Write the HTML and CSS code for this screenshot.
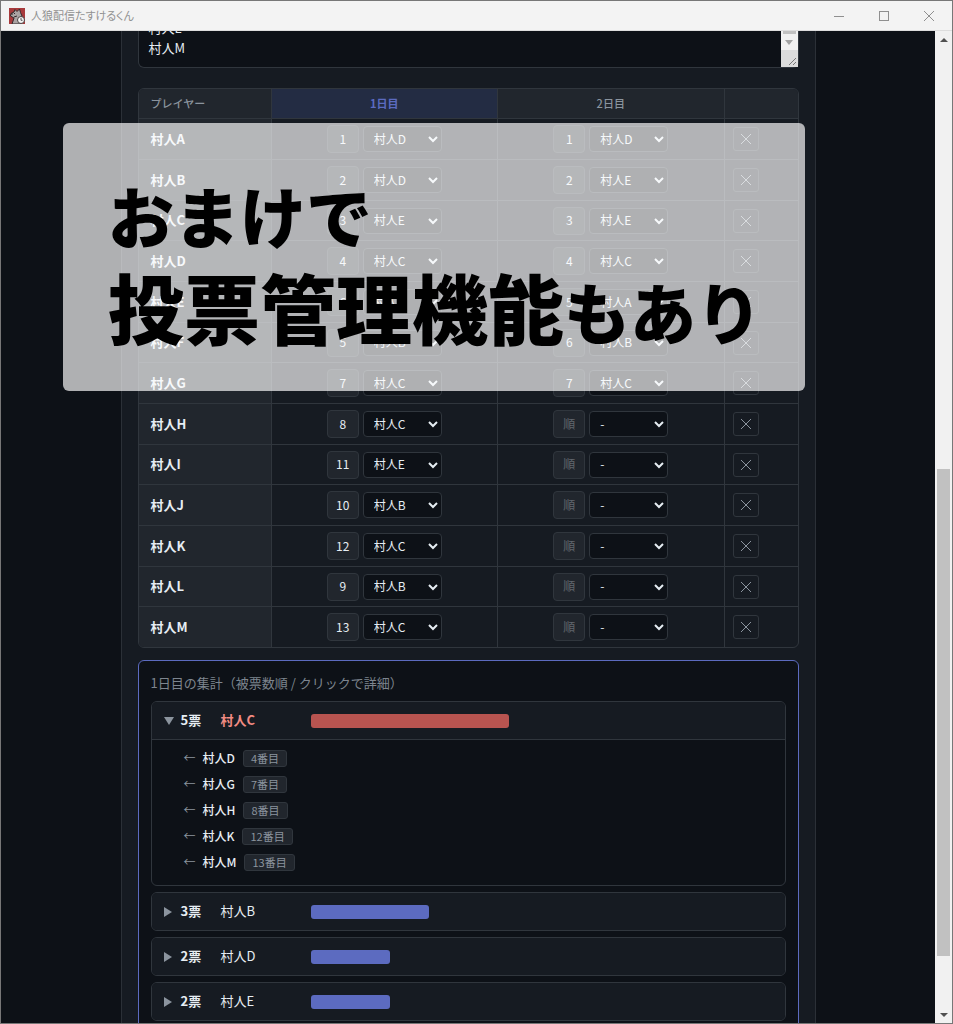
FILE: index.html
```html
<!DOCTYPE html>
<html lang="ja">
<head>
  <meta charset="UTF-8">
  <meta name="viewport" content="width=device-width, initial-scale=1.0">
  <title>人狼配信たすけるくん</title>
  <link rel="stylesheet" href="styles.css">
</head>
<body>
  <div class="window">
    <header class="titlebar">
      <svg class="app-icon" viewBox="0 0 16 16" aria-hidden="true">
        <rect width="16" height="16" fill="#a83a3c"/>
        <path d="M3 16 L5 10 L1.500 8 L2 5.500 L5 4 L6 1.500 L8 3.500 L10.500 1 L11.500 4.500 L13 8 L12 12 L11 16 Z" fill="#aaa3a3" stroke="#332b2d" stroke-width="1"/>
        <path d="M2 6 L4 6 M5 5.500 L6 5.500 M5 9 L8 8" stroke="#332b2d" stroke-width="1" fill="none"/>
        <circle cx="12" cy="12" r="3.500" fill="#f4f4f4" stroke="#4a4243"/>
        <path d="M12 10 V12.300 H13.500" fill="none" stroke="#555"/>
      </svg>
      <span class="app-title">人狼配信たすけるくん</span>
      <div class="window-buttons">
        <button type="button" aria-label="最小化"><svg viewBox="0 0 12 12"><path d="M1 6.500H11"/></svg></button>
        <button type="button" aria-label="最大化"><svg viewBox="0 0 12 12"><rect x="1.500" y="1.500" width="9" height="9"/></svg></button>
        <button type="button" aria-label="閉じる"><svg viewBox="0 0 12 12"><path d="M1 1L11 11M11 1L1 11"/></svg></button>
      </div>
    </header>

    <div class="viewport">
      <main class="page">
        <div class="card">
          <div class="names">
            <textarea class="names-input" aria-label="プレイヤー名">村人L
村人M</textarea>
            <div class="names-scroll">
              <span class="names-thumb"></span>
              <svg class="names-arrow" viewBox="0 0 8 5"><path d="M0 0H8L4 5Z"/></svg>
              <svg class="names-grip" viewBox="0 0 17 17"><path d="M8 15L15 8M12 15L15 12"/></svg>
            </div>
          </div>

          <div class="table-wrap">
            <table class="votes">
              <colgroup>
                <col class="col-name"><col><col><col class="col-delete">
              </colgroup>
              <thead>
                <tr>
                  <th class="left">プレイヤー</th>
                  <th class="active">1日目</th>
                  <th>2日目</th>
                  <th></th>
                </tr>
              </thead>
              <tbody id="vote-rows"></tbody>
            </table>
          </div>

          <section class="summary-panel">
            <h2 class="summary-title">1日目の集計（被票数順 / クリックで詳細）</h2>
            <div class="results">
              <details class="result top" open>
                <summary>
                  <span class="marker"></span><span class="count">5票</span><span class="target">村人C</span>
                  <span class="track"><span class="bar" style="width: 100%"></span></span>
                </summary>
                <ul class="voters">
                  <li><span class="arrow">←</span><span class="voter">村人D</span><span class="order">4番目</span></li>
                  <li><span class="arrow">←</span><span class="voter">村人G</span><span class="order">7番目</span></li>
                  <li><span class="arrow">←</span><span class="voter">村人H</span><span class="order">8番目</span></li>
                  <li><span class="arrow">←</span><span class="voter">村人K</span><span class="order">12番目</span></li>
                  <li><span class="arrow">←</span><span class="voter">村人M</span><span class="order">13番目</span></li>
                </ul>
              </details>
              <details class="result">
                <summary>
                  <span class="marker"></span><span class="count">3票</span><span class="target">村人B</span>
                  <span class="track"><span class="bar" style="width: 60%"></span></span>
                </summary>
              </details>
              <details class="result">
                <summary>
                  <span class="marker"></span><span class="count">2票</span><span class="target">村人D</span>
                  <span class="track"><span class="bar" style="width: 40%"></span></span>
                </summary>
              </details>
              <details class="result">
                <summary>
                  <span class="marker"></span><span class="count">2票</span><span class="target">村人E</span>
                  <span class="track"><span class="bar" style="width: 40%"></span></span>
                </summary>
              </details>
            </div>
          </section>
        </div>
      </main>

      <div class="scrollbar" aria-hidden="true">
        <span class="scroll-arrow"><svg viewBox="0 0 8 4"><path d="M0 4H8L4 0Z"/></svg></span>
        <span class="scroll-before"></span>
        <span class="scroll-thumb"></span>
        <span class="scroll-after"></span>
        <span class="scroll-arrow"><svg viewBox="0 0 8 4"><path d="M0 0H8L4 4Z"/></svg></span>
      </div>
    </div>

    <div class="caption">
      <p>おまけで</p>
      <p><span class="kanji">投票管理機能</span>もあり</p>
    </div>
  </div>

  <script src="script.js"></script>
</body>
</html>
```

FILE: styles.css
```css
* {
  box-sizing: border-box;
}

body {
  margin: 0;
  background: #0d1117;
  color: #e6edf3;
  font-family: "Noto Sans CJK JP", sans-serif;
  font-size: 13px;
}

button, input, select, textarea {
  font-family: inherit;
  color: inherit;
}

.window {
  position: relative;
  display: flex;
  flex-direction: column;
  height: 100vh;
  border: 1px solid #777;
  overflow: hidden;
}

/* title bar */
.titlebar {
  display: flex;
  align-items: center;
  flex: 0 0 30px;
  padding-left: 8px;
  background: #f3f3f3;
  border-bottom: 1px solid #ddd;
}
.app-icon {
  width: 16px;
  height: 16px;
  margin-right: 6px;
}
.app-title {
  padding-bottom: 2px;
  color: #919191;
  font-size: 11px;
  font-feature-settings: "palt";
}
.window-buttons {
  display: flex;
  margin-left: auto;
  padding-right: 1px;
}
.window-buttons button {
  display: flex;
  align-items: center;
  justify-content: center;
  width: 45px;
  height: 28px;
  padding: 0;
  border: 0;
  background: none;
}
.window-buttons svg {
  width: 12px;
  height: 12px;
  fill: none;
  stroke: #8f8f8f;
}

/* page */
.viewport {
  display: flex;
  flex: 1;
  min-height: 0;
}
.page {
  flex: 1;
  overflow: hidden;
}
.card {
  max-width: 695px;
  margin: -17px auto 0;
  padding: 0 16px 16px;
  background: #161b22;
  border: 1px solid #2b3037;
  border-top: 0;
}

.names {
  display: flex;
  height: 54px;
  margin-bottom: 20px;
  border: 1px solid #30363d;
  border-top: 0;
  border-radius: 0 0 6px 6px;
  background: #0d1117;
}
.names-input {
  flex: 1;
  padding: 4px 10px;
  border: 0;
  background: none;
  font-size: 13px;
  line-height: 20px;
  resize: none;
  overflow: hidden;
}
.names-scroll {
  display: flex;
  flex-direction: column;
  align-items: center;
  width: 17px;
  background: #f1f1f1;
}
.names-thumb {
  width: 13px;
  height: 20px;
  background: #c1c1c1;
}
.names-arrow {
  width: 8px;
  height: 5px;
  margin: 6px 0 5px;
  fill: #a3a3a3;
}
.names-grip {
  width: 17px;
  height: 17px;
  background: #dcdcdc;
  stroke: #777;
}

/* vote table */
.table-wrap {
  margin-bottom: 12px;
  border: 1px solid #30363d;
  border-radius: 6px;
  overflow: hidden;
}
.votes {
  width: 100%;
  table-layout: fixed;
  border-collapse: separate;
  border-spacing: 0;
}
.col-name {
  width: 133px;
}
.col-delete {
  width: 73px;
}
.votes th,
.votes td {
  padding: 0;
  border-right: 1px solid #30363d;
  border-bottom: 1px solid #30363d;
}
.votes th:last-child,
.votes td:last-child {
  border-right: 0;
}
.votes tbody tr:last-child td {
  border-bottom: 0;
}
.votes th {
  height: 30px;
  padding-bottom: 2px;
  background: #21262d;
  color: #8b949e;
  font-size: 11px;
  font-weight: 500;
}
.votes th.left {
  padding-left: 12px;
  text-align: left;
}
.votes th.active {
  background: #232c43;
  color: #5c6bc0;
  font-weight: bold;
}
.votes td {
  height: 41px;
}
.votes tr:nth-child(3n) td,
.votes tbody tr:last-child td {
  height: 40px;
}
.votes .player {
  padding: 0 0 2px 12px;
  background: #21262d;
  font-weight: bold;
}
.vote {
  display: flex;
  align-items: center;
  justify-content: center;
  gap: 4px;
}
.vote-order {
  width: 32px;
  height: 28px;
  padding: 0 0 2px;
  border: 1px solid #30363d;
  border-radius: 4px;
  background: #21262d;
  font-size: 12px;
  text-align: center;
}
.vote-order::placeholder {
  color: #62676e;
}
.vote-target {
  width: 79px;
  height: 26px;
  padding: 0 0 2px 6px;
  border: 1px solid #30363d;
  border-radius: 4px;
  background-color: #0d1117;
  font-size: 12px;
}
.delete {
  display: flex;
  align-items: center;
  justify-content: center;
  width: 26px;
  height: 24px;
  margin-left: 8px;
  padding: 0;
  border: 1px solid #30363d;
  border-radius: 3px;
  background: none;
}
.delete svg {
  width: 12px;
  height: 12px;
  stroke: #8b949e;
}

/* totals */
.summary-panel {
  padding: 12px;
  border: 1px solid #5c6bc0;
  border-radius: 6px;
  background: #0d1117;
}
.summary-title {
  margin: 0 0 8px;
  color: #7d858e;
  font-size: 13px;
  font-weight: normal;
  line-height: 20px;
}
.results {
  display: flex;
  flex-direction: column;
  gap: 6px;
}
.result {
  border: 1px solid #30363d;
  border-radius: 6px;
  overflow: hidden;
}
.result summary {
  display: flex;
  align-items: center;
  height: 37px;
  padding: 0 12px;
  background: #161b22;
  list-style: none;
  cursor: pointer;
}
.marker {
  width: 17px;
}
.marker::before {
  content: "";
  display: block;
  width: 0;
  border-left: 8px solid #8b949e;
  border-top: 5px solid transparent;
  border-bottom: 5px solid transparent;
}
.result[open] .marker::before {
  border-top: 8px solid #8b949e;
  border-bottom: 0;
  border-left: 5px solid transparent;
  border-right: 5px solid transparent;
}
.count,
.target {
  padding-bottom: 2px;
}
.count {
  width: 40px;
  font-weight: bold;
}
.target {
  width: 90px;
}
.top .target {
  color: #f28b82;
  font-weight: bold;
}
.track {
  width: 198px;
}
.bar {
  display: block;
  height: 14px;
  border-radius: 3px;
  background: #5c6bc0;
}
.top .bar {
  background: #b85450;
}
.voters {
  margin: 0;
  padding: 5px 32px 10px;
  border-top: 1px solid #30363d;
  list-style: none;
}
.voters li {
  display: flex;
  align-items: center;
  height: 26px;
  font-size: 12px;
}
.arrow {
  width: 19px;
  padding-bottom: 2px;
  color: #8b949e;
}
.voter {
  margin-right: 8px;
  padding-bottom: 2px;
  font-weight: 500;
}
.order {
  padding: 0 7px;
  border: 1px solid #30363d;
  border-radius: 3px;
  background: #21262d;
  color: #8b949e;
  font-size: 11px;
  line-height: 15px;
}

/* window scrollbar */
.scrollbar {
  display: flex;
  flex-direction: column;
  width: 17px;
  padding: 0 2px;
  background: #f1f1f1;
}
.scroll-arrow {
  display: flex;
  align-items: center;
  justify-content: center;
  height: 17px;
}
.scroll-arrow svg {
  width: 8px;
  height: 4px;
  fill: #505050;
}
.scroll-before {
  flex: 421;
}
.scroll-thumb {
  flex: 487;
  background: #c1c1c1;
}
.scroll-after {
  flex: 50;
}

/* caption laid over the window */
.caption {
  position: absolute;
  top: 122px;
  left: 62px;
  right: 147px;
  padding: 45px 45px 39px;
  border-radius: 6px;
  background: rgba(255, 255, 255, 0.67);
  color: #000;
  font-size: 66px;
  font-weight: 900;
  white-space: nowrap;
}
.caption p {
  height: 92px;
  margin: 0;
  line-height: 92px;
}
.caption .kanji {
  font-size: 76px;
}
```

FILE: script.js
```js
const players = ['A', 'B', 'C', 'D', 'E', 'F', 'G', 'H', 'I', 'J', 'K', 'L', 'M'];

// [order, target] per player
const day1 = [[1, 'D'], [2, 'D'], [3, 'E'], [4, 'C'], [6, 'A'], [5, 'B'], [7, 'C'], [8, 'C'], [11, 'E'], [10, 'B'], [12, 'C'], [9, 'B'], [13, 'C']];
const day2 = [[1, 'D'], [2, 'E'], [3, 'E'], [4, 'C'], [5, 'A'], [6, 'B'], [7, 'C']];

function voteCell(player, day, vote) {
  const [order, target] = vote || ['', ''];
  const options = players.map(p => `<option${p === target ? ' selected' : ''}>村人${p}</option>`).join('');
  return `<td><div class="vote">
    <input class="vote-order" type="text" placeholder="順" value="${order}" aria-label="村人${player} ${day}日目 順番">
    <select class="vote-target" aria-label="村人${player} ${day}日目 投票先"><option>-</option>${options}</select>
  </div></td>`;
}

document.getElementById('vote-rows').innerHTML = players.map((player, i) => `
  <tr>
    <td class="player">村人${player}</td>
    ${voteCell(player, 1, day1[i])}
    ${voteCell(player, 2, day2[i])}
    <td><button class="delete" type="button" aria-label="村人${player}を削除"><svg viewBox="0 0 12 12"><path d="M1 1L11 11M11 1L1 11"/></svg></button></td>
  </tr>`).join('');
```
